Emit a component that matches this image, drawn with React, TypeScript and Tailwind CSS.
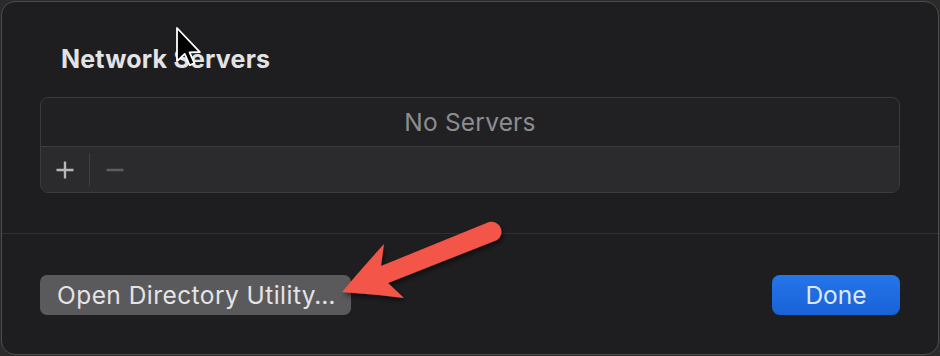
import React from "react";

export default function App() {
  return (
    <div className="relative w-[940px] h-[356px] bg-[#2b2b2c] p-[1px] font-[Inter,'Liberation_Sans',sans-serif]">
      <div className="flex flex-col h-full rounded-[14px] border border-[#4c4c4e] bg-[#1e1e20] overflow-hidden">
        {/* top section */}
        <div className="flex flex-col px-[38px] pt-[42px] pb-[40px]">
          <div className="ml-[21px] text-[25px] leading-[30px] font-bold text-[#e3e3e5] tracking-[0.2px]">
            Network Servers
          </div>
          <div className="mt-[23px] flex flex-col rounded-[8px] border border-[#3b3b3d] bg-[#212123] overflow-hidden">
            <div className="h-[48px] flex items-center justify-center text-[24.5px] text-[#8d8d90] tracking-[0.2px]">
              No Servers
            </div>
            <div className="h-[46px] flex items-center border-t border-[#3b3b3d] bg-[#2b2b2d]">
              <div className="w-[48px] flex items-center justify-center">
                <svg width="18" height="18" viewBox="0 0 18 18">
                  <path d="M9 0.5V17.5M0.5 9H17.5" stroke="#b7b7b9" strokeWidth="2.4" />
                </svg>
              </div>
              <div className="w-px h-[33px] bg-[#3f3f41]" />
              <div className="w-[49px] flex items-center justify-center">
                <svg width="18" height="4" viewBox="0 0 18 4">
                  <path d="M0.5 2H17.5" stroke="#5e5e60" strokeWidth="2.4" />
                </svg>
              </div>
            </div>
          </div>
        </div>
        <div className="h-px bg-[#303032]" />
        {/* bottom section */}
        <div className="flex items-center justify-between px-[38px] pt-[41px]">
          <div className="h-[40px] w-[311px] rounded-[7px] bg-[#5a5a5c] flex items-center pl-[17px] text-[24.5px] text-[#e4e4e6] tracking-[0.45px]">
            Open Directory Utility…
          </div>
          <div className="h-[40px] w-[128px] rounded-[8px] bg-gradient-to-b from-[#2675ea] to-[#1862d6] flex items-center justify-center text-[24.5px] text-[#dde9ff]">
            Done
          </div>
        </div>
      </div>

      {/* overlays: annotation arrow and mouse cursor */}
      <svg
        className="absolute left-0 top-0 pointer-events-none"
        width="940"
        height="356"
        viewBox="0 0 940 356"
      >
        <defs>
          <filter id="sh" x="-20%" y="-20%" width="140%" height="160%">
            <feDropShadow dx="1.5" dy="3" stdDeviation="2.5" floodColor="#000" floodOpacity="0.55" />
          </filter>
        </defs>
        <path
          d="M342 292 Q 364 266 384 244 L 381 266 L 489 222 A 10 10 0 0 1 497 240 L 388 283 L 404 298 Q 372 294 342 292 Z"
          fill="#f35749"
          filter="url(#sh)"
        />
        <g transform="translate(177 28) scale(1.38)">
          <path
            d="M0 0 L0 24 L5.6 18.8 L9.2 27 L12.6 25.5 L9.1 17.6 L16.6 17.4 Z"
            fill="#000"
            stroke="#fff"
            strokeWidth="1.3"
            strokeLinejoin="round"
          />
        </g>
      </svg>
    </div>
  );
}
